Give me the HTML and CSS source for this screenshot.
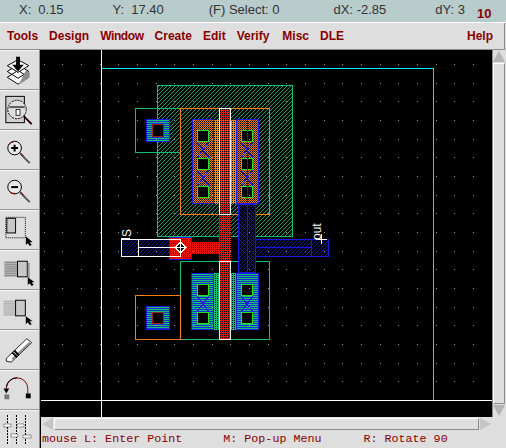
FILE: index.html
```html
<!DOCTYPE html>
<html lang="en">

<head>
    <meta charset="UTF-8">
    <title>Layout Editor</title>
    <link rel="stylesheet" href="styles.css">
</head>

<body>
    <header class="coords">
        <span class="c-x">X:</span><span class="c-xv">0.15</span>
        <span class="c-y">Y:</span><span class="c-yv">17.40</span>
        <span class="c-sel">(F) Select: 0</span>
        <span class="c-dx">dX: -2.85</span>
        <span class="c-dy">dY: 3</span>
        <span class="c-num">10</span>
    </header>

    <nav class="menu">
        <a>Tools</a>
        <a>Design</a>
        <a class="m-window">Window</a>
        <a>Create</a>
        <a>Edit</a>
        <a>Verify</a>
        <a class="m-misc">Misc</a>
        <a>DLE</a>
        <a class="help">Help</a>
    </nav>

    <div class="workspace">
        <aside class="toolbar">
            <button class="tool">
                <svg viewBox="0 0 38 39">
                    <path d="M18 14 L29 21 L18 28 L7 21Z M18 20 L29 27 L18 34 L7 27Z" fill="#fff" stroke="#000"/>
                    <path d="M19 34 L30 27 L30 22 L26 20" fill="#8c8c8c"/>
                    <path d="M18 9 L7 15 L18 22 L29 15Z" fill="#fff" stroke="#000"/>
                    <path d="M16 6 H20 V14 H24 L18 21 L12 14 H16Z" fill="#000"/>
                </svg>
            </button>
            <button class="tool">
                <svg viewBox="0 0 38 39">
                    <rect x="5.5" y="5.5" width="19" height="27" fill="#cfcfcf" stroke="#000"/>
                    <circle cx="17" cy="19" r="9.5" fill="#dedede" stroke="#000" stroke-dasharray="2 1"/>
                    <path d="M9 16 H25 M9 17 H25" stroke="#555"/>
                    <rect x="16" y="19" width="4" height="6" fill="#fff" stroke="#333"/>
                    <path d="M24 26 L32 34" stroke="#000" stroke-width="2"/>
                    <path d="M25 27 L31 33" stroke="#8b0000"/>
                </svg>
            </button>
            <button class="tool">
                <svg viewBox="0 0 38 39">
                    <circle cx="14.5" cy="17.5" r="7" fill="#e8e8e8" stroke="#000"/>
                    <path d="M8 15 A7 7 0 0 1 14 11" fill="none" stroke="#8b0000"/>
                    <path d="M11 17.5 H18 M14.5 14 V21" stroke="#000" stroke-width="2"/>
                    <path d="M20 23 L30 33" stroke="#555" stroke-width="2"/>
                    <path d="M20 22 L24 26" stroke="#8b0000"/>
                </svg>
            </button>
            <button class="tool">
                <svg viewBox="0 0 38 39">
                    <circle cx="14.5" cy="16.5" r="7" fill="#e8e8e8" stroke="#000"/>
                    <path d="M9 21 A7 7 0 0 0 15 23" fill="none" stroke="#8b0000"/>
                    <path d="M11 16.5 H18" stroke="#000" stroke-width="2"/>
                    <path d="M20 22 L30 32" stroke="#555" stroke-width="2"/>
                    <path d="M20 21 L24 25" stroke="#8b0000"/>
                </svg>
            </button>
            <button class="tool">
                <svg viewBox="0 0 38 39">
                    <rect x="5.5" y="6.5" width="20" height="21" fill="none" stroke="#000" stroke-dasharray="1 1"/>
                    <rect x="6.5" y="7.5" width="9" height="15" fill="#c8c8c8" stroke="#000"/>
                    <path d="M26 26 V35 L28 33 L30 36 L32 35 L30 32 L33 32Z" fill="#000"/>
                </svg>
            </button>
            <button class="tool">
                <svg viewBox="0 0 38 39">
                    <path d="M4 11.5 H17 M4 13.5 H17 M4 15.5 H17 M4 17.5 H17 M4 19.5 H17 M4 21.5 H17 M4 23.5 H17 M4 25.5 H17" stroke="#666"/>
                    <rect x="17.5" y="10.5" width="10" height="16" fill="#c8c8c8" stroke="#000"/>
                    <path d="M28 12 H30 V28 H28Z" fill="#9a9a9a"/>
                    <path d="M28 27 V35 L30 33 L32 36 L34 35 L32 32 L35 32Z" fill="#000"/>
                </svg>
            </button>
            <button class="tool">
                <svg viewBox="0 0 38 39">
                    <path d="M3 10.5 H15 M3 12.5 H15 M3 14.5 H15 M3 16.5 H15 M3 18.5 H15 M3 20.5 H15 M3 22.5 H15 M3 24.5 H15" stroke="#a0a0a0"/>
                    <rect x="15.5" y="9.5" width="10" height="16" fill="#c8c8c8" stroke="#000"/>
                    <path d="M26 26 V34 L28 32 L30 35 L32 34 L30 31 L33 31Z" fill="#000"/>
                </svg>
            </button>
            <button class="tool">
                <svg viewBox="0 0 38 39">
                    <path d="M6 28 L27 8 L32 12 L11 32 L6 31Z" fill="#fff" stroke="#222"/>
                    <path d="M12 29 L30 12" stroke="#8c8c8c" stroke-width="2"/>
                    <path d="M12 22 L17 27 M14 20 L19 25" stroke="#000" stroke-width="2"/>
                </svg>
            </button>
            <button class="tool">
                <svg viewBox="0 0 38 39">
                    <path d="M6 20 V18 A11 11 0 0 1 28 18 V23" fill="none" stroke="#8b0000"/>
                    <path d="M6 16 A11 11 0 0 1 17 7" fill="none" stroke="#000"/>
                    <path d="M3 18 H9 L6 23Z" fill="#000"/>
                    <rect x="26" y="23" width="5" height="5" fill="#000"/>
                    <rect x="4" y="24" width="5" height="5" fill="#777"/>
                </svg>
            </button>
            <button class="tool last">
                <svg viewBox="0 0 38 38">
                    <path d="M7.5 4 V33 M16.5 4 V33 M25.5 4 V33" stroke="#000" stroke-dasharray="2 1"/>
                    <path d="M9.5 4 V33 M18.5 4 V33 M27.5 4 V33" stroke="#fff" stroke-dasharray="2 1"/>
                    <path d="M4 13H11V16H4Z M11 23H18V26H11Z M17 13H24V16H17Z M23 24H31V27H23Z" fill="#fff" stroke="#333" stroke-width=".5"/>
                </svg>
            </button>
        </aside>

        <div class="main">
            <div class="view">
                <div class="canvas">
                    <!-- pmos -->
                    <div class="shape well"></div>
                    <div class="shape well-frame"></div>
                    <div class="shape p-frame"></div>
                    <div class="shape pad-top"></div>
                    <div class="shape hole hole-top"></div>
                    <div class="shape p-strip p-strip-l"></div>
                    <div class="shape p-strip p-strip-r"></div>
                    <div class="shape p-diff p-diff-l"></div>
                    <div class="shape p-diff p-diff-r"></div>

                    <!-- nmos -->
                    <div class="shape n-frame"></div>
                    <div class="shape n-strip n-strip-l"></div>
                    <div class="shape n-strip n-strip-r"></div>
                    <div class="shape n-diff n-diff-l"></div>
                    <div class="shape n-diff n-diff-r"></div>
                    <div class="shape sub-frame"></div>
                    <div class="shape pad-bottom"></div>
                    <div class="shape hole hole-bottom"></div>

                    <!-- output metal and input pin -->
                    <div class="shape metal-v"></div>
                    <div class="shape metal-h"></div>
                    <div class="shape pin"></div>

                    <!-- poly -->
                    <div class="shape gate"></div>
                    <div class="shape gate-p"></div>
                    <div class="shape gate-bar"></div>
                    <div class="shape gate-pad"></div>
                    <div class="shape gate-top"></div>
                    <div class="shape gate-bottom"></div>

                    <!-- contacts -->
                    <div class="shape cut col-a row-1"></div>
                    <div class="shape cut col-a row-2"></div>
                    <div class="shape cut col-a row-3"></div>
                    <div class="shape cut col-b row-1"></div>
                    <div class="shape cut col-b row-2"></div>
                    <div class="shape cut col-b row-3"></div>
                    <div class="shape cut col-a row-4"></div>
                    <div class="shape cut col-a row-5"></div>
                    <div class="shape cut col-b row-4"></div>
                    <div class="shape cut col-b row-5"></div>

                    <!-- lines, grid and labels on top -->
                    <svg class="overlay" width="451" height="367" viewBox="41 50 451 367" shape-rendering="crispEdges">
                        <path class="frame" d="M101.5 68.5H433.5V400"/>
                        <path class="axis" d="M101.5 50V417 M41 400.5H492"/>
                        <path class="straps" d="M247.5 120V272 M255 247.5H311.5 M311.5 239V257 M197 142L209 158 M209 142L197 158 M197 170L209 186 M209 170L197 186 M241 142L253 158 M253 142L241 158 M241 170L253 186 M253 170L241 186 M197 296L209 312 M209 296L197 312 M241 296L253 312 M253 296L241 312"/>
                        <path class="axis" d="M121.5 239.5H180.5V256.5H121.5Z M138.5 239.5V256.5 M138.5 247.5H181"/>
                        <path d="M175 247.5L180.5 242L186 247.5L180.5 253Z" fill="#000" stroke="#fff"/>
                        <path class="axis" d="M175 247.5H186 M180.5 242V253 M121 238.5H130 M321.5 234V244 M316 239.5H327"/>
                        <path class="dots" d="M43.5 64.5H492 M43.5 83.5H492 M43.5 101.5H492 M43.5 120.5H492 M43.5 139.5H492 M43.5 157.5H492 M43.5 176.5H492 M43.5 195.5H492 M43.5 213.5H492 M43.5 232.5H492 M43.5 251.5H492 M43.5 269.5H492 M43.5 288.5H492 M43.5 307.5H492 M43.5 325.5H492 M43.5 344.5H492 M43.5 363.5H492 M43.5 381.5H492"/>
                        <text class="label" transform="translate(131 237) rotate(-90)">S</text>
                        <text class="label" transform="translate(321 240) rotate(-90)">out</text>
                    </svg>
                </div>

                <div class="vscroll">
                    <span class="arrow-up"></span>
                    <div class="thumb"></div>
                    <span class="arrow-down"></span>
                </div>
            </div>

            <div class="hscroll">
                <span class="arrow-left"></span>
                <div class="thumb"></div>
                <span class="arrow-right"></span>
            </div>

            <footer class="status">
                <span class="s-l">mouse L: Enter Point</span>
                <span class="s-m">M: Pop-up Menu</span>
                <span class="s-r">R: Rotate 90</span>
            </footer>
        </div>
    </div>
</body>

</html>
```

FILE: styles.css
```css
* {
    box-sizing: border-box;
}

body {
    margin: 0;
    width: 506px;
    height: 448px;
    overflow: hidden;
    background-color: #dedede;
    font-family: "Liberation Sans", Arial, sans-serif;
}

/* coordinate readout */
.coords {
    display: flex;
    height: 23px;
    padding-top: 2px;
    background-color: #b9cccc;
    border-bottom: 1px solid #fff;
    color: #333;
    font-size: 13px;
    line-height: 15px;
}

.coords span {
    white-space: nowrap;
}

.c-x { margin-left: 19px; }
.c-xv { margin-left: 7px; }
.c-y { margin-left: 49px; }
.c-yv { margin-left: 7px; }
.c-sel { margin-left: 45px; }
.c-dx { margin-left: 54px; }
.c-dy { margin-left: 49px; }

.c-num {
    margin-left: 12px;
    margin-top: 4px;
    color: #8b0000;
    font-weight: bold;
}

/* menu bar */
.menu {
    display: flex;
    gap: 11px;
    height: 27px;
    padding: 0 11px 0 7px;
    align-items: center;
    background-color: #dedede;
    border-right: 1px solid #8c8c8c;
    border-bottom: 1px solid #8c8c8c;
    margin-right: 1px;
    color: #8b0000;
    font-size: 12px;
    font-weight: bold;
}

.m-window {
    letter-spacing: -0.4px;
}

.m-misc {
    margin-left: 2px;
}

.help {
    margin-left: auto;
}

.workspace {
    display: flex;
    height: 398px;
}

/* left tool column */
.toolbar {
    width: 41px;
    flex: none;
    display: flex;
    flex-direction: column;
    border-right: 1px solid #000;
    box-shadow: inset -1px 0 0 #8c8c8c;
}

.tool {
    display: block;
    width: 39px;
    height: 40px;
    padding: 0;
    background-color: #dedede;
    border: none;
    border-top: 1px solid #f4f4f4;
    border-bottom: 1px solid #9a9a9a;
}

.tool.last {
    height: 38px;
    border-bottom: none;
}

.tool svg {
    display: block;
    width: 38px;
    height: 38px;
}

.main {
    flex: 1;
    display: flex;
    flex-direction: column;
}

.view {
    display: flex;
    height: 367px;
}

/* layout canvas: shapes sit at their drawing coordinates */
.canvas {
    position: relative;
    flex: none;
    width: 451px;
    height: 367px;
    overflow: hidden;
    background-color: #000;
}

.shape {
    position: absolute;
}

.overlay {
    position: absolute;
    left: 0;
    top: 0;
}

/* conic tiles are 2x2 pixel stipples, one colour per pixel */
.well {
    left: 116px;
    top: 35px;
    width: 136px;
    height: 152px;
    border: 1px solid #10c070;
    background: repeating-linear-gradient(135deg, #14a066 0 1.1px, #000 0 2.83px);
}

.well-frame {
    left: 94px;
    top: 58px;
    width: 46px;
    height: 45px;
    border: 1px solid #10c070;
}

.p-frame {
    left: 139px;
    top: 58px;
    width: 90px;
    height: 107px;
    border: 1px solid #f08010;
}

.pad-top,
.pad-bottom {
    left: 105px;
    width: 24px;
    border: 1px solid #1818e0;
    background: conic-gradient(#18c070 25%, #1030d0 0 50%, #1030d0 0 75%, #18c070 0) 0 0 / 2px 2px;
}

.pad-top {
    top: 69px;
    height: 23px;
}

.pad-bottom {
    top: 256px;
    height: 24px;
}

.hole {
    left: 111px;
    width: 12px;
    background-color: #000;
    border: 1px solid #a02020;
}

.hole-top {
    top: 74px;
    height: 13px;
}

.hole-bottom {
    top: 262px;
    height: 12px;
}

.p-strip {
    top: 70px;
    height: 84px;
    background: conic-gradient(#f08a20 25%, #000 0 50%, #f08a20 0 75%, #f08a20 0) 0 0 / 2px 2px;
}

.p-strip-l {
    left: 172px;
    width: 6px;
}

.p-strip-r {
    left: 190px;
    width: 5px;
}

.p-diff {
    top: 69px;
    height: 85px;
    border: 1px solid #1818e0;
    background: conic-gradient(#f07a10 25%, #000 0 50%, #f07a10 0 75%, #1c1cc0 0) 0 0 / 2px 2px;
}

.p-diff-l {
    left: 151px;
    width: 22px;
}

.p-diff-r {
    left: 195px;
    width: 23px;
}

.n-frame {
    left: 139px;
    top: 211px;
    width: 90px;
    height: 79px;
    border: 1px solid #10c070;
}

.n-strip {
    top: 223px;
    width: 5px;
    height: 57px;
    background: conic-gradient(#18c070 25%, #000 0 50%, #18c070 0 75%, #18c070 0) 0 0 / 2px 2px;
}

.n-strip-l {
    left: 173px;
}

.n-strip-r {
    left: 190px;
}

.n-diff {
    top: 223px;
    width: 23px;
    height: 57px;
    border: 1px solid #1818e0;
    background: conic-gradient(#18c070 25%, #1030d0 0 50%, #1030d0 0 75%, #18c070 0) 0 0 / 2px 2px;
}

.n-diff-l {
    left: 150px;
}

.n-diff-r {
    left: 195px;
}

.sub-frame {
    left: 94px;
    top: 245px;
    width: 46px;
    height: 45px;
    border: 1px solid #f08010;
}

.metal-v {
    left: 197px;
    top: 154px;
    width: 18px;
    height: 69px;
    border: 1px solid #1818e0;
    background:
        repeating-linear-gradient(135deg, #14149c 0 0.7px, transparent 0 2.83px),
        repeating-linear-gradient(45deg, #14149c 0 0.7px, #000 0 2.83px);
}

.metal-h {
    left: 214px;
    top: 189px;
    width: 74px;
    height: 18px;
    border: 1px solid #1818e0;
    background: repeating-linear-gradient(135deg, #14149c 0 0.9px, #000 0 2.83px);
}

.pin {
    left: 80px;
    top: 189px;
    width: 60px;
    height: 18px;
    background: repeating-linear-gradient(135deg, #14149c 0 0.9px, #000 0 2.83px);
}

.gate {
    left: 178px;
    top: 58px;
    width: 12px;
    height: 232px;
    background: conic-gradient(#f01000 25%, #000 0 50%, #f01000 0 75%, #f01000 0) 0 0 / 2px 2px;
}

.gate-p {
    left: 178px;
    top: 70px;
    width: 12px;
    height: 84px;
    background: conic-gradient(#f01000 25%, #000 0 50%, #f01000 0 75%, #f08010 0) 0 0 / 2px 2px;
}

.gate-bar {
    left: 151px;
    top: 192px;
    width: 27px;
    height: 12px;
    background: conic-gradient(#f01000 25%, #000 0 50%, #f01000 0 75%, #f01000 0) 0 0 / 2px 2px;
}

.gate-pad {
    left: 128px;
    top: 187px;
    width: 23px;
    height: 23px;
    border: 1px solid #1818e0;
    background: conic-gradient(#f01000 25%, #10105c 0 50%, #f01000 0 75%, #f01000 0) 0 0 / 2px 2px;
}

.gate-top,
.gate-bottom {
    left: 178px;
    width: 12px;
    border: 1px solid #fff;
}

.gate-top {
    top: 58px;
    height: 107px;
}

.gate-bottom {
    top: 211px;
    height: 79px;
}

.cut {
    width: 12px;
    height: 12px;
    background-color: #000;
    border: 1px solid #30e020;
}

.col-a { left: 156px; }
.col-b { left: 200px; }
.row-1 { top: 80px; }
.row-2 { top: 108px; }
.row-3 { top: 136px; }
.row-4 { top: 234px; }
.row-5 { top: 262px; }

.dots {
    fill: none;
    stroke: #9a9a9a;
    stroke-dasharray: 1 17.67;
}

.frame {
    fill: none;
    stroke: #00e8f0;
}

.axis {
    fill: none;
    stroke: #fff;
}

.straps {
    fill: none;
    stroke: #1818e0;
}

.label {
    fill: #fff;
    font-family: "Liberation Sans", Arial, sans-serif;
    font-size: 12px;
}

/* scrollbars */
.vscroll {
    width: 14px;
    display: flex;
    flex-direction: column;
    align-items: center;
    padding-right: 2px;
    border-left: 1px solid #8c8c8c;
    background-color: #dedede;
}

.vscroll .thumb {
    flex: 1;
    width: 12px;
    margin: 1px 0;
    border: 1px solid #fff;
    border-right-color: #8c8c8c;
    border-bottom-color: #8c8c8c;
}

.arrow-up,
.arrow-down {
    width: 0;
    height: 0;
    flex: none;
    border-left: 6px solid transparent;
    border-right: 6px solid transparent;
}

.arrow-up {
    margin-top: 1px;
    border-bottom: 11px solid #b4b4b4;
}

.arrow-down {
    margin-bottom: 1px;
    border-top: 11px solid #b4b4b4;
}

.hscroll {
    display: flex;
    align-items: center;
    width: 451px;
    height: 13px;
    background-color: #dedede;
}

.hscroll .thumb {
    flex: 1;
    height: 12px;
    margin: 0 1px;
    border: 1px solid #fff;
    border-right-color: #8c8c8c;
    border-bottom-color: #8c8c8c;
}

.arrow-left,
.arrow-right {
    width: 0;
    height: 0;
    flex: none;
    border-top: 6px solid transparent;
    border-bottom: 6px solid transparent;
}

.arrow-left {
    border-right: 11px solid #c4c4c4;
    margin-left: 1px;
}

.arrow-right {
    border-left: 11px solid #c4c4c4;
    margin-right: 1px;
}

/* prompt line */
.status {
    display: flex;
    height: 18px;
    padding-left: 1px;
    align-items: center;
    color: #8b0000;
    font-family: "Liberation Mono", "Courier New", monospace;
    font-size: 11.7px;
    white-space: nowrap;
}

.s-m { margin-left: 41px; }
.s-r { margin-left: 42px; }
```
